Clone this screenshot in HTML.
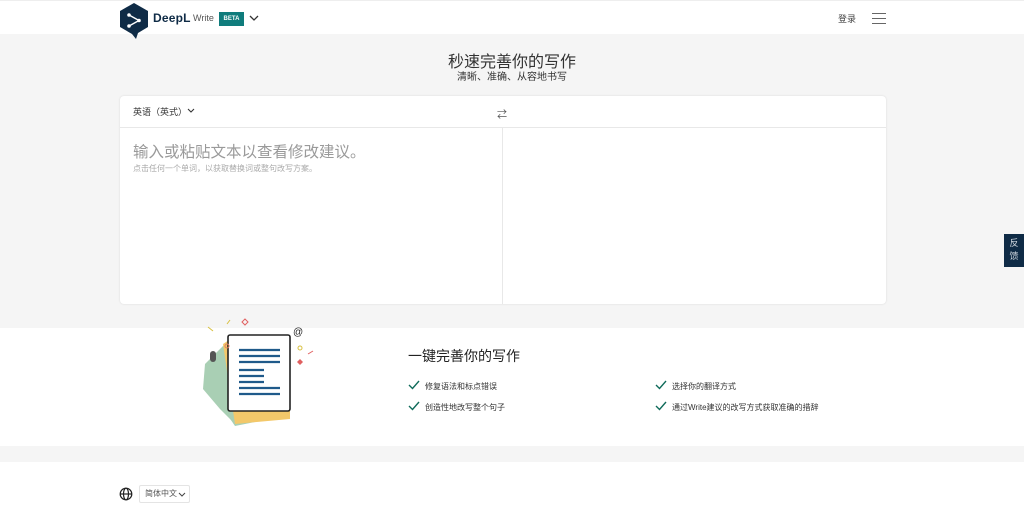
<!DOCTYPE html>
<html><head><meta charset="utf-8"><style>
*{margin:0;padding:0;box-sizing:border-box}
body{width:1024px;height:512px;position:relative;overflow:hidden;background:#fff;font-family:"Liberation Sans","Noto Sans CJK SC",sans-serif;color:#1b1e25}
.a{position:absolute}
</style></head><body>
<div class="a" style="left:0;top:0;width:1024px;height:34px;background:#fff;border-top:1px solid #eee"></div>
<div class="a" style="left:0;top:34px;width:1024px;height:294px;background:#f5f5f5"></div>
<div class="a" style="left:0;top:446px;width:1024px;height:16px;background:#f5f5f5"></div>
<!-- logo -->
<svg class="a" style="left:119px;top:3px" width="30" height="36" viewBox="0 0 30 36"><path d="M15 0 L29 8 V24 L19 30 L17 36 L13 31 L1 24 V8 Z" fill="#0f2b46"/><circle cx="10" cy="12" r="1.8" fill="#fff"/><circle cx="10" cy="23" r="1.8" fill="#fff"/><circle cx="20" cy="17.5" r="1.8" fill="#fff"/><path d="M10 12 L20 17.5 L10 23" stroke="#fff" stroke-width="1.4" fill="none"/></svg>
<div class="a" style="left:153px;top:11px;font-size:12px;font-weight:bold;color:#0f2b46;letter-spacing:0.2px">DeepL</div>
<div class="a" style="left:193px;top:13px;font-size:9px;color:#555">Write</div>
<div class="a" style="left:219px;top:12px;width:25px;height:14px;background:#0f7c7c;color:#fff;font-size:6px;font-weight:bold;text-align:center;line-height:14px">BETA</div>
<svg class="a" style="left:249px;top:14px" width="10" height="8"><path d="M1 2 L5 6 L9 2" stroke="#333" stroke-width="1.3" fill="none"/></svg>
<div class="a" style="left:838px;top:12px;font-size:9px;color:#444">登录</div>
<div class="a" style="left:872px;top:13px;width:14px;height:1px;background:#666"></div>
<div class="a" style="left:872px;top:18px;width:14px;height:1px;background:#666"></div>
<div class="a" style="left:872px;top:23px;width:14px;height:1px;background:#666"></div>
<!-- title -->
<div class="a" style="left:0;top:48px;width:1024px;text-align:center;font-size:16px;color:#333">秒速完善你的写作</div>
<div class="a" style="left:0;top:68px;width:1024px;text-align:center;font-size:10px;color:#333">清晰、准确、从容地书写</div>
<!-- card -->
<div class="a" style="left:120px;top:96px;width:766px;height:208px;background:#fff;border-radius:4px;box-shadow:0 0 2px rgba(0,0,0,.12)"></div>
<div class="a" style="left:120px;top:127px;width:766px;height:1px;background:#e8e8e8"></div>
<div class="a" style="left:502px;top:128px;width:1px;height:176px;background:#e8e8e8"></div>
<div class="a" style="left:133px;top:105px;font-size:9px;color:#333">英语（英式）</div>
<svg class="a" style="left:187px;top:108px" width="8" height="6"><path d="M1 1 L4 4 L7 1" stroke="#333" stroke-width="1.1" fill="none"/></svg>
<div class="a" style="left:497px;top:106px;font-size:10px;color:#555">⇄</div>
<div class="a" style="left:133px;top:140px;font-size:15.5px;color:#9a9a9a">输入或粘贴文本以查看修改建议。</div>
<div class="a" style="left:133px;top:163px;font-size:8px;color:#aaa">点击任何一个单词，以获取替换词或整句改写方案。</div>
<!-- feedback tab -->
<div class="a" style="left:1004px;top:234px;width:20px;height:33px;background:#0f2b46;color:#cfd6de;font-size:9px;line-height:13px;text-align:center;padding-top:3px">反<br>馈</div>
<!-- illustration -->
<svg class="a" style="left:195px;top:314px" width="130" height="120" viewBox="0 0 130 120">
<path d="M10 50 L30 30 L40 40 L40 110 L25 95 L8 75 Z" fill="#a9cfb4"/>
<path d="M25 90 L40 112 L60 108 L45 90 Z" fill="#a9cfb4"/>
<path d="M28 30 L40 22 L95 22 L95 105 L40 110 Z" fill="#f3c86a"/>
<rect x="33" y="21" width="62" height="76" rx="2" fill="#fff" stroke="#222" stroke-width="1.6"/>
<g stroke="#1f5a8a" stroke-width="2.2"><line x1="44" y1="36" x2="85" y2="36"/><line x1="44" y1="42" x2="85" y2="42"/><line x1="44" y1="48" x2="85" y2="48"/><line x1="44" y1="56" x2="69" y2="56"/><line x1="44" y1="62" x2="69" y2="62"/><line x1="44" y1="68" x2="69" y2="68"/><line x1="44" y1="74" x2="85" y2="74"/><line x1="44" y1="80" x2="85" y2="80"/></g>
<rect x="15" y="37" width="6" height="11" rx="3" fill="#555"/>
<text x="98" y="21" font-size="10" font-family="Liberation Sans" fill="#222">@</text>
<path d="M50 5 l3 3 -3 3 -3 -3z" fill="none" stroke="#e06060"/>
<path d="M105 45 l3 3 -3 3 -3 -3z" fill="#e06060"/>
<circle cx="105" cy="34" r="2" fill="none" stroke="#d8c040"/>
<line x1="13" y1="13" x2="18" y2="17" stroke="#d8c040"/>
<line x1="32" y1="10" x2="35" y2="6" stroke="#d8c040"/>
<line x1="113" y1="40" x2="118" y2="37" stroke="#e06060"/>
<circle cx="32" cy="32" r="2" fill="none" stroke="#e08060"/>
</svg>
<div class="a" style="left:408px;top:346px;font-size:14px;color:#222">一键完善你的写作</div>
<svg class="a" style="left:408px;top:380px" width="12" height="10"><path d="M1 5 L4.5 8.5 L11 1" stroke="#0f6b5a" stroke-width="1.4" fill="none"/></svg>
<svg class="a" style="left:408px;top:401px" width="12" height="10"><path d="M1 5 L4.5 8.5 L11 1" stroke="#0f6b5a" stroke-width="1.4" fill="none"/></svg>
<svg class="a" style="left:655px;top:380px" width="12" height="10"><path d="M1 5 L4.5 8.5 L11 1" stroke="#0f6b5a" stroke-width="1.4" fill="none"/></svg>
<svg class="a" style="left:655px;top:401px" width="12" height="10"><path d="M1 5 L4.5 8.5 L11 1" stroke="#0f6b5a" stroke-width="1.4" fill="none"/></svg>
<div class="a" style="left:425px;top:381px;font-size:8px;color:#333">修复语法和标点错误</div>
<div class="a" style="left:425px;top:402px;font-size:8px;color:#333">创造性地改写整个句子</div>
<div class="a" style="left:672px;top:381px;font-size:8px;color:#333">选择你的翻译方式</div>
<div class="a" style="left:672px;top:402px;font-size:8px;color:#333">通过Write建议的改写方式获取准确的措辞</div>
<!-- footer -->
<svg class="a" style="left:119px;top:487px" width="14" height="14" viewBox="0 0 14 14"><g fill="none" stroke="#222" stroke-width="1.2"><circle cx="7" cy="7" r="5.8"/><ellipse cx="7" cy="7" rx="2.5" ry="5.8"/><line x1="1.2" y1="7" x2="12.8" y2="7"/></g></svg>
<div class="a" style="left:139px;top:485px;width:51px;height:18px;border:1px solid #e4e4e4;border-radius:2px;font-size:8px;color:#555;line-height:16px;padding-left:5px">简体中文</div>
<svg class="a" style="left:178px;top:492px" width="8" height="6"><path d="M1 1 L4 4 L7 1" stroke="#444" stroke-width="1" fill="none"/></svg>
</body></html>
